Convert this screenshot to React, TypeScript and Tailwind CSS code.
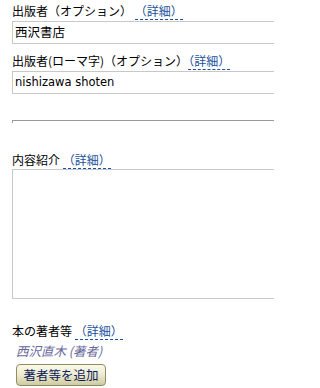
const jp = { fontFamily: '"Noto Sans CJK JP", "Liberation Sans", sans-serif' };

const Detail = () => (
  <a className="text-[#1c4f9c] border-b border-dashed border-[#1c4f9c] leading-[14px] cursor-pointer">
    （詳細）
  </a>
);

const Field = ({ label, value, latin }: { label: React.ReactNode; value: string; latin?: boolean }) => (
  <div className="flex flex-col">
    <div className="h-[17px] text-[12px] leading-[16px] text-black whitespace-nowrap">{label}</div>
    <div className="mt-[1px] h-[23px] w-[300px] border border-[#c8c8c8] bg-white px-[2px] flex items-center">
      <span
        className="text-[12.5px] text-black whitespace-nowrap"
        style={latin ? { fontFamily: '"DejaVu Sans", sans-serif', fontSize: "11.5px" } : undefined}
      >
        {value}
      </span>
    </div>
  </div>
);

export default function App() {
  return (
    <div className="w-[274px] h-[388px] overflow-hidden bg-white pl-[12px] pt-[3px]" style={jp}>
      <Field
        label={
          <>
            出版者（オプション） <Detail />
          </>
        }
        value="西沢書店"
      />
      <div className="mt-[9px]">
        <Field
          label={
            <>
              出版者(ローマ字)（オプション）<Detail />
            </>
          }
          value="nishizawa shoten"
          latin
        />
      </div>

      <div className="mt-[26px] h-[3px] w-[300px] border-t border-l border-[#9a9a9a]" />

      <div className="mt-[29px] h-[17px] text-[12px] leading-[16px] text-black whitespace-nowrap">
        内容紹介 <Detail />
      </div>
      <div className="h-[130px] w-[300px] border border-[#c8c8c8] bg-white" />

      <div className="mt-[24px] h-[17px] text-[12px] leading-[16px] text-black whitespace-nowrap">
        本の著者等 <Detail />
      </div>
      <div className="mt-[3px] pl-[4px] text-[12.5px] leading-[16px] italic text-[#68689a]">西沢直木 (著者)</div>
      <div className="mt-[2px] pl-[4px]">
        <button className="h-[22px] w-[90px] rounded-[4px] border border-[#8f8c62] bg-gradient-to-b from-[#fbfaea] via-[#ecead0] to-[#cfcb9f] text-[12.5px] leading-[20px] text-[#0d1a5a]">
          著者等を追加
        </button>
      </div>
    </div>
  );
}
